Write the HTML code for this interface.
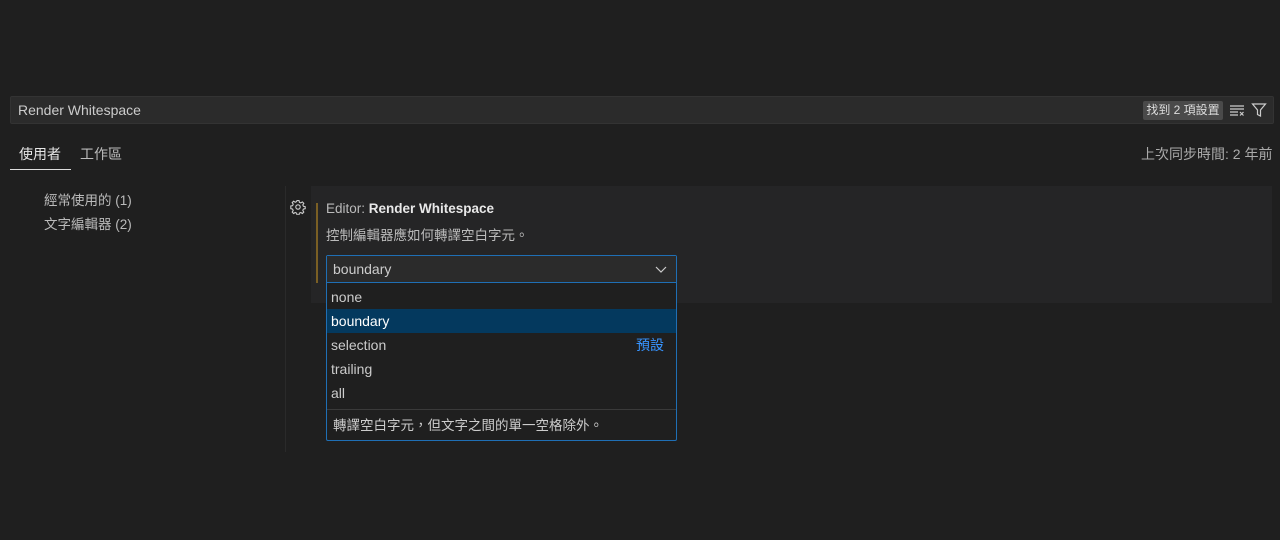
<!DOCTYPE html>
<html><head><meta charset="utf-8"><style>
*{margin:0;padding:0;box-sizing:border-box}
body{width:1280px;height:540px;background:#1f1f1f;font-family:"Liberation Sans","Noto Sans CJK TC",sans-serif;font-size:13px;color:#ccc;position:relative;overflow:hidden}
.a{position:absolute}
</style></head><body>
<div class="a" style="left:10px;top:96px;width:1264px;height:28px;background:#2b2b2b;border:1px solid #333;border-radius:2px"></div>
<div class="a" style="left:18px;top:102px;font-size:14px;color:#ccc">Render Whitespace</div>
<div class="a" style="left:1143px;top:101px;width:80px;height:19px;background:#4a4a4a;border-radius:2px;color:#ddd;font-size:12px;line-height:19px;text-align:center">找到 2 項設置</div>
<svg class="a" style="left:1229px;top:102px" width="16" height="16" viewBox="0 0 16 16" fill="none" stroke="#ccc" stroke-width="1.2"><path d="M1 4h14M1 7h14M1 10h8M1 13h8M11 10l3.5 3.5M14.5 10L11 13.5"/></svg>
<svg class="a" style="left:1251px;top:102px" width="16" height="16" viewBox="0 0 16 16" fill="none" stroke="#ccc" stroke-width="1.2"><path d="M1.5 2h13l-5 6v6l-3-1.5V8z"/></svg>
<div class="a" style="left:19px;top:144px;font-size:14px;color:#e7e7e7">使用者</div>
<div class="a" style="left:80px;top:144px;font-size:14px;color:#bbb">工作區</div>
<div class="a" style="left:10px;top:169px;width:61px;height:1px;background:#ddd"></div>
<div class="a" style="left:1141px;top:144px;font-size:14px;color:#aaa">上次同步時間: 2 年前</div>
<div class="a" style="left:44px;top:189px;color:#bbb;font-size:13.5px">經常使用的 (1)</div>
<div class="a" style="left:44px;top:213px;color:#bbb;font-size:13.5px">文字編輯器 (2)</div>
<div class="a" style="left:285px;top:186px;width:1px;height:266px;background:#2a2a2a"></div>
<div class="a" style="left:311px;top:186px;width:961px;height:117px;background:#252526"></div>
<svg class="a" style="left:290px;top:199px" width="16" height="16" viewBox="0 0 16 16" fill="none" stroke="#ccc" stroke-width="1.1"><circle cx="8" cy="8" r="2.2"/><path d="M7 1.5h2l.4 1.8 1.4.6 1.6-1 1.4 1.4-1 1.6.6 1.4 1.8.4v2l-1.8.4-.6 1.4 1 1.6-1.4 1.4-1.6-1-1.4.6-.4 1.8H7l-.4-1.8-1.4-.6-1.6 1-1.4-1.4 1-1.6-.6-1.4-1.8-.4V7l1.8-.4.6-1.4-1-1.6 1.4-1.4 1.6 1 1.4-.6z"/></svg>
<div class="a" style="left:316px;top:203px;width:2px;height:80px;background:#7a5f24"></div>
<div class="a" style="left:326px;top:201px;font-size:13.5px;color:#bbb">Editor: <b style="color:#e8e8e8">Render Whitespace</b></div>
<div class="a" style="left:326px;top:224px;font-size:13.5px;color:#bbb">控制編輯器應如何轉譯空白字元。</div>
<div class="a" style="left:326px;top:255px;width:351px;height:186px;border:1px solid #1f6fb5;border-radius:2px;background:#1f1f1f"></div>
<div class="a" style="left:327px;top:256px;width:349px;height:27px;background:#2b2b2b;border-bottom:1px solid #1f6fb5"></div>
<div class="a" style="left:333px;top:261px;font-size:14px;color:#ccc">boundary</div>
<svg class="a" style="left:654px;top:262px" width="14" height="14" viewBox="0 0 14 14" fill="none" stroke="#ccc" stroke-width="1.2"><path d="M2 5l5 5 5-5"/></svg>
<div class="a" style="left:331px;top:289px;font-size:14px;color:#ccc">none</div>
<div class="a" style="left:327px;top:309px;width:349px;height:24px;background:#04395e"></div>
<div class="a" style="left:331px;top:313px;font-size:14px;color:#fff">boundary</div>
<div class="a" style="left:331px;top:337px;font-size:14px;color:#ccc">selection</div>
<div class="a" style="left:636px;top:335px;font-size:14px;color:#3794ff">預設</div>
<div class="a" style="left:331px;top:361px;font-size:14px;color:#ccc">trailing</div>
<div class="a" style="left:331px;top:385px;font-size:14px;color:#ccc">all</div>
<div class="a" style="left:327px;top:409px;width:349px;height:1px;background:#3a3a3a"></div>
<div class="a" style="left:333px;top:414px;font-size:13.5px;color:#ccc">轉譯空白字元，但文字之間的單一空格除外。</div>
</body></html>
